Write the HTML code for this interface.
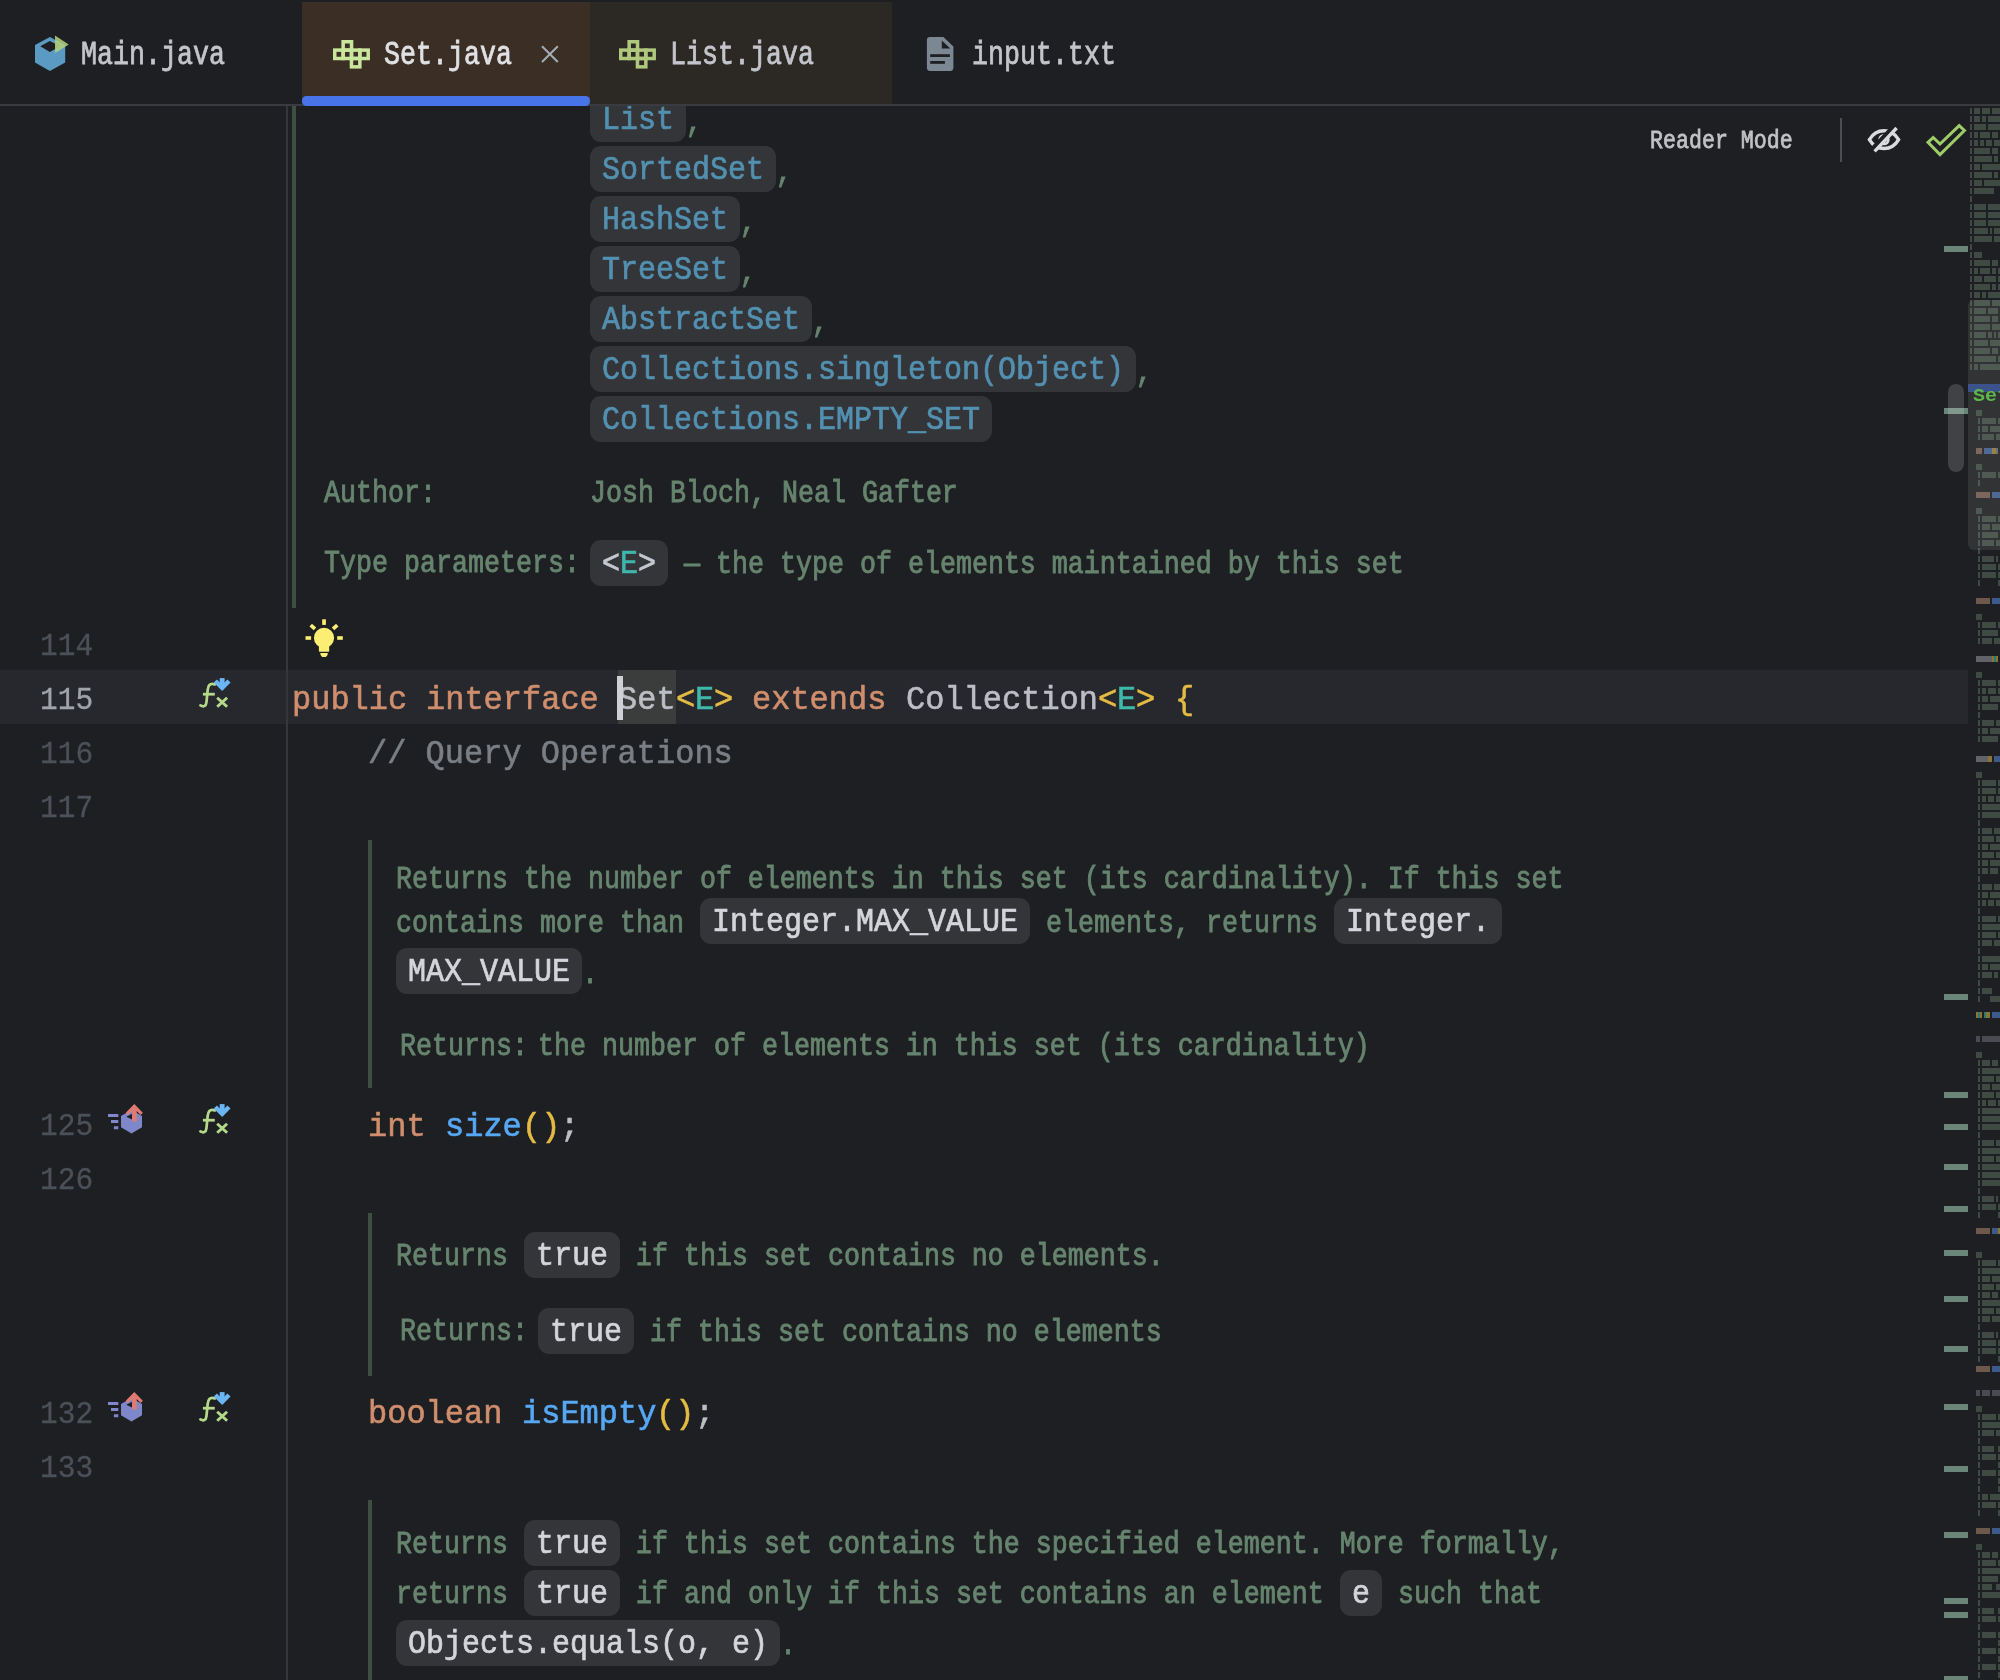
<!DOCTYPE html>
<html><head><meta charset="utf-8"><title>Set.java</title><style>
html,body{margin:0;padding:0;overflow:hidden;}
body{width:2000px;height:1680px;background:#1e1f22;overflow:hidden;position:relative;font-family:"Liberation Mono",monospace;}
.t{position:absolute;white-space:pre;line-height:1;transform-origin:0 0;display:block;}
#w{position:absolute;left:0;top:0;width:2000px;height:1680px;overflow:hidden;will-change:opacity;}
.r{position:absolute;}
.i{position:absolute;overflow:visible;}
</style></head><body><div id="w">
<div class="r" style="left:0.00px;top:670.00px;width:1968.00px;height:54.00px;background:#26282e;"></div>
<div class="r" style="left:618.00px;top:670.00px;width:58.00px;height:54.00px;background:#3a3d3c;"></div>
<div class="r" style="left:286.30px;top:106.00px;width:1.50px;height:1574.00px;background:#35363b;"></div>
<div class="r" style="left:292.00px;top:106.00px;width:4.00px;height:501.50px;background:#3e4f42;"></div>
<div class="r" style="left:368.00px;top:840.00px;width:4.00px;height:247.50px;background:#3e4f42;"></div>
<div class="r" style="left:368.00px;top:1212.50px;width:4.00px;height:163.00px;background:#3e4f42;"></div>
<div class="r" style="left:368.00px;top:1500.00px;width:4.00px;height:180.00px;background:#3e4f42;"></div>
<div class="r" style="left:590.00px;top:96.25px;width:96.00px;height:45.50px;background:#343539;border-radius:11px;"></div>
<span class="t" style="left:602.30px;top:104.75px;font-size:32.3px;color:#5390b0;transform:scaleX(0.9286);-webkit-text-stroke:0.70px #5390b0;">List</span>
<span class="t" style="left:686.00px;top:106.60px;font-size:31.2px;color:#66846e;transform:scaleX(0.8546);-webkit-text-stroke:0.90px #66846e;">,</span>
<div class="r" style="left:590.00px;top:146.25px;width:186.00px;height:45.50px;background:#343539;border-radius:11px;"></div>
<span class="t" style="left:602.30px;top:154.75px;font-size:32.3px;color:#5390b0;transform:scaleX(0.9286);-webkit-text-stroke:0.70px #5390b0;">SortedSet</span>
<span class="t" style="left:776.00px;top:156.60px;font-size:31.2px;color:#66846e;transform:scaleX(0.8546);-webkit-text-stroke:0.90px #66846e;">,</span>
<div class="r" style="left:590.00px;top:196.25px;width:150.00px;height:45.50px;background:#343539;border-radius:11px;"></div>
<span class="t" style="left:602.30px;top:204.75px;font-size:32.3px;color:#5390b0;transform:scaleX(0.9286);-webkit-text-stroke:0.70px #5390b0;">HashSet</span>
<span class="t" style="left:740.00px;top:206.60px;font-size:31.2px;color:#66846e;transform:scaleX(0.8546);-webkit-text-stroke:0.90px #66846e;">,</span>
<div class="r" style="left:590.00px;top:246.25px;width:150.00px;height:45.50px;background:#343539;border-radius:11px;"></div>
<span class="t" style="left:602.30px;top:254.75px;font-size:32.3px;color:#5390b0;transform:scaleX(0.9286);-webkit-text-stroke:0.70px #5390b0;">TreeSet</span>
<span class="t" style="left:740.00px;top:256.60px;font-size:31.2px;color:#66846e;transform:scaleX(0.8546);-webkit-text-stroke:0.90px #66846e;">,</span>
<div class="r" style="left:590.00px;top:296.25px;width:222.00px;height:45.50px;background:#343539;border-radius:11px;"></div>
<span class="t" style="left:602.30px;top:304.75px;font-size:32.3px;color:#5390b0;transform:scaleX(0.9286);-webkit-text-stroke:0.70px #5390b0;">AbstractSet</span>
<span class="t" style="left:812.00px;top:306.60px;font-size:31.2px;color:#66846e;transform:scaleX(0.8546);-webkit-text-stroke:0.90px #66846e;">,</span>
<div class="r" style="left:590.00px;top:346.25px;width:546.00px;height:45.50px;background:#343539;border-radius:11px;"></div>
<span class="t" style="left:602.30px;top:354.75px;font-size:32.3px;color:#5390b0;transform:scaleX(0.9286);-webkit-text-stroke:0.70px #5390b0;">Collections.singleton(Object)</span>
<span class="t" style="left:1136.00px;top:356.60px;font-size:31.2px;color:#66846e;transform:scaleX(0.8546);-webkit-text-stroke:0.90px #66846e;">,</span>
<div class="r" style="left:590.00px;top:396.25px;width:402.00px;height:45.50px;background:#343539;border-radius:11px;"></div>
<span class="t" style="left:602.30px;top:404.75px;font-size:32.3px;color:#5390b0;transform:scaleX(0.9286);-webkit-text-stroke:0.70px #5390b0;">Collections.EMPTY_SET</span>
<span class="t" style="left:324.00px;top:477.60px;font-size:31.2px;color:#66846e;transform:scaleX(0.8546);-webkit-text-stroke:0.90px #66846e;">Author:</span>
<span class="t" style="left:590.00px;top:477.85px;font-size:31.2px;color:#66846e;transform:scaleX(0.8546);-webkit-text-stroke:0.90px #66846e;">Josh Bloch, Neal Gafter</span>
<span class="t" style="left:324.00px;top:547.60px;font-size:31.2px;color:#66846e;transform:scaleX(0.8546);-webkit-text-stroke:0.90px #66846e;">Type parameters:</span>
<div class="r" style="left:590.00px;top:540.00px;width:78.00px;height:45.50px;background:#343539;border-radius:11px;"></div>
<span class="t" style="left:602.30px;top:548.50px;font-size:32.3px;color:#c5c8d0;transform:scaleX(0.9286);-webkit-text-stroke:0.70px #c5c8d0;">&lt;</span>
<span class="t" style="left:620.30px;top:548.50px;font-size:32.3px;color:#3fb5ac;transform:scaleX(0.9286);-webkit-text-stroke:0.70px #3fb5ac;">E</span>
<span class="t" style="left:638.30px;top:548.50px;font-size:32.3px;color:#c5c8d0;transform:scaleX(0.9286);-webkit-text-stroke:0.70px #c5c8d0;">&gt;</span>
<span class="t" style="left:668.00px;top:548.60px;font-size:31.2px;color:#66846e;transform:scaleX(0.8546);-webkit-text-stroke:0.90px #66846e;"> — the type of elements maintained by this set</span>
<span class="t" style="left:291.60px;top:684.34px;font-size:33.5px;color:#cf8e6d;transform:scaleX(0.9551);-webkit-text-stroke:0.60px #cf8e6d;">public</span>
<span class="t" style="left:426.00px;top:684.34px;font-size:33.5px;color:#cf8e6d;transform:scaleX(0.9551);-webkit-text-stroke:0.60px #cf8e6d;">interface</span>
<span class="t" style="left:618.00px;top:684.34px;font-size:33.5px;color:#bcbec4;transform:scaleX(0.9551);-webkit-text-stroke:0.60px #bcbec4;">Set</span>
<span class="t" style="left:675.60px;top:684.34px;font-size:33.5px;color:#e4bb44;transform:scaleX(0.9551);-webkit-text-stroke:0.60px #e4bb44;">&lt;</span>
<span class="t" style="left:694.80px;top:684.34px;font-size:33.5px;color:#3fb8a9;transform:scaleX(0.9551);-webkit-text-stroke:0.60px #3fb8a9;">E</span>
<span class="t" style="left:714.00px;top:684.34px;font-size:33.5px;color:#e4bb44;transform:scaleX(0.9551);-webkit-text-stroke:0.60px #e4bb44;">&gt;</span>
<span class="t" style="left:752.40px;top:684.34px;font-size:33.5px;color:#cf8e6d;transform:scaleX(0.9551);-webkit-text-stroke:0.60px #cf8e6d;">extends</span>
<span class="t" style="left:906.00px;top:684.34px;font-size:33.5px;color:#bcbec4;transform:scaleX(0.9551);-webkit-text-stroke:0.60px #bcbec4;">Collection</span>
<span class="t" style="left:1098.00px;top:684.34px;font-size:33.5px;color:#e4bb44;transform:scaleX(0.9551);-webkit-text-stroke:0.60px #e4bb44;">&lt;</span>
<span class="t" style="left:1117.20px;top:684.34px;font-size:33.5px;color:#3fb8a9;transform:scaleX(0.9551);-webkit-text-stroke:0.60px #3fb8a9;">E</span>
<span class="t" style="left:1136.40px;top:684.34px;font-size:33.5px;color:#e4bb44;transform:scaleX(0.9551);-webkit-text-stroke:0.60px #e4bb44;">&gt;</span>
<span class="t" style="left:1174.80px;top:684.34px;font-size:33.5px;color:#e4bb44;transform:scaleX(0.9551);-webkit-text-stroke:0.60px #e4bb44;">{</span>
<span class="t" style="left:368.40px;top:738.09px;font-size:33.5px;color:#7a7e85;transform:scaleX(0.9551);-webkit-text-stroke:0.60px #7a7e85;">// Query Operations</span>
<span class="t" style="left:368.40px;top:1110.59px;font-size:33.5px;color:#cf8e6d;transform:scaleX(0.9551);-webkit-text-stroke:0.60px #cf8e6d;">int</span>
<span class="t" style="left:445.20px;top:1110.59px;font-size:33.5px;color:#56a8f5;transform:scaleX(0.9551);-webkit-text-stroke:0.60px #56a8f5;">size</span>
<span class="t" style="left:522.00px;top:1110.59px;font-size:33.5px;color:#e4bb44;transform:scaleX(0.9551);-webkit-text-stroke:0.60px #e4bb44;">()</span>
<span class="t" style="left:560.40px;top:1110.59px;font-size:33.5px;color:#bcbec4;transform:scaleX(0.9551);-webkit-text-stroke:0.60px #bcbec4;">;</span>
<span class="t" style="left:368.40px;top:1398.09px;font-size:33.5px;color:#cf8e6d;transform:scaleX(0.9551);-webkit-text-stroke:0.60px #cf8e6d;">boolean</span>
<span class="t" style="left:522.00px;top:1398.09px;font-size:33.5px;color:#56a8f5;transform:scaleX(0.9551);-webkit-text-stroke:0.60px #56a8f5;">isEmpty</span>
<span class="t" style="left:656.40px;top:1398.09px;font-size:33.5px;color:#e4bb44;transform:scaleX(0.9551);-webkit-text-stroke:0.60px #e4bb44;">()</span>
<span class="t" style="left:694.80px;top:1398.09px;font-size:33.5px;color:#bcbec4;transform:scaleX(0.9551);-webkit-text-stroke:0.60px #bcbec4;">;</span>
<div class="r" style="left:617.00px;top:676.00px;width:6.20px;height:44.00px;background:#ced0d6;"></div>
<span class="t" style="left:396.00px;top:863.60px;font-size:31.2px;color:#66846e;transform:scaleX(0.8546);-webkit-text-stroke:0.90px #66846e;">Returns the number of elements in this set (its cardinality). If this set</span>
<span class="t" style="left:396.00px;top:907.85px;font-size:31.2px;color:#66846e;transform:scaleX(0.8546);-webkit-text-stroke:0.90px #66846e;">contains more than </span>
<div class="r" style="left:700.00px;top:898.00px;width:330.00px;height:45.50px;background:#343539;border-radius:11px;"></div>
<span class="t" style="left:712.30px;top:906.50px;font-size:32.3px;color:#d3d5db;transform:scaleX(0.9286);-webkit-text-stroke:0.70px #d3d5db;">Integer.MAX_VALUE</span>
<span class="t" style="left:1030.00px;top:907.85px;font-size:31.2px;color:#66846e;transform:scaleX(0.8546);-webkit-text-stroke:0.90px #66846e;"> elements, returns </span>
<div class="r" style="left:1334.00px;top:898.00px;width:168.00px;height:45.50px;background:#343539;border-radius:11px;"></div>
<span class="t" style="left:1346.30px;top:906.50px;font-size:32.3px;color:#d3d5db;transform:scaleX(0.9286);-webkit-text-stroke:0.70px #d3d5db;">Integer.</span>
<div class="r" style="left:396.00px;top:948.00px;width:186.00px;height:45.50px;background:#343539;border-radius:11px;"></div>
<span class="t" style="left:408.30px;top:956.50px;font-size:32.3px;color:#d3d5db;transform:scaleX(0.9286);-webkit-text-stroke:0.70px #d3d5db;">MAX_VALUE</span>
<span class="t" style="left:582.00px;top:958.60px;font-size:31.2px;color:#66846e;transform:scaleX(0.8546);-webkit-text-stroke:0.90px #66846e;">.</span>
<span class="t" style="left:400.00px;top:1031.10px;font-size:31.2px;color:#66846e;transform:scaleX(0.8546);-webkit-text-stroke:0.90px #66846e;">Returns:</span>
<span class="t" style="left:538.00px;top:1031.10px;font-size:31.2px;color:#66846e;transform:scaleX(0.8546);-webkit-text-stroke:0.90px #66846e;">the number of elements in this set (its cardinality)</span>
<span class="t" style="left:396.00px;top:1241.35px;font-size:31.2px;color:#66846e;transform:scaleX(0.8546);-webkit-text-stroke:0.90px #66846e;">Returns </span>
<div class="r" style="left:524.00px;top:1232.00px;width:96.00px;height:45.50px;background:#343539;border-radius:11px;"></div>
<span class="t" style="left:536.30px;top:1240.50px;font-size:32.3px;color:#d3d5db;transform:scaleX(0.9286);-webkit-text-stroke:0.70px #d3d5db;">true</span>
<span class="t" style="left:620.00px;top:1241.35px;font-size:31.2px;color:#66846e;transform:scaleX(0.8546);-webkit-text-stroke:0.90px #66846e;"> if this set contains no elements.</span>
<span class="t" style="left:400.00px;top:1315.60px;font-size:31.2px;color:#66846e;transform:scaleX(0.8546);-webkit-text-stroke:0.90px #66846e;">Returns:</span>
<div class="r" style="left:538.00px;top:1308.00px;width:96.00px;height:45.50px;background:#343539;border-radius:11px;"></div>
<span class="t" style="left:550.30px;top:1316.50px;font-size:32.3px;color:#d3d5db;transform:scaleX(0.9286);-webkit-text-stroke:0.70px #d3d5db;">true</span>
<span class="t" style="left:634.00px;top:1317.35px;font-size:31.2px;color:#66846e;transform:scaleX(0.8546);-webkit-text-stroke:0.90px #66846e;"> if this set contains no elements</span>
<span class="t" style="left:396.00px;top:1529.10px;font-size:31.2px;color:#66846e;transform:scaleX(0.8546);-webkit-text-stroke:0.90px #66846e;">Returns </span>
<div class="r" style="left:524.00px;top:1520.00px;width:96.00px;height:45.50px;background:#343539;border-radius:11px;"></div>
<span class="t" style="left:536.30px;top:1528.50px;font-size:32.3px;color:#d3d5db;transform:scaleX(0.9286);-webkit-text-stroke:0.70px #d3d5db;">true</span>
<span class="t" style="left:620.00px;top:1529.10px;font-size:31.2px;color:#66846e;transform:scaleX(0.8546);-webkit-text-stroke:0.90px #66846e;"> if this set contains the specified element. More formally,</span>
<span class="t" style="left:396.00px;top:1579.10px;font-size:31.2px;color:#66846e;transform:scaleX(0.8546);-webkit-text-stroke:0.90px #66846e;">returns </span>
<div class="r" style="left:524.00px;top:1570.00px;width:96.00px;height:45.50px;background:#343539;border-radius:11px;"></div>
<span class="t" style="left:536.30px;top:1578.50px;font-size:32.3px;color:#d3d5db;transform:scaleX(0.9286);-webkit-text-stroke:0.70px #d3d5db;">true</span>
<span class="t" style="left:620.00px;top:1579.10px;font-size:31.2px;color:#66846e;transform:scaleX(0.8546);-webkit-text-stroke:0.90px #66846e;"> if and only if this set contains an element </span>
<div class="r" style="left:1340.00px;top:1570.00px;width:42.00px;height:45.50px;background:#343539;border-radius:11px;"></div>
<span class="t" style="left:1352.30px;top:1578.50px;font-size:32.3px;color:#d3d5db;transform:scaleX(0.9286);-webkit-text-stroke:0.70px #d3d5db;">e</span>
<span class="t" style="left:1382.00px;top:1579.10px;font-size:31.2px;color:#66846e;transform:scaleX(0.8546);-webkit-text-stroke:0.90px #66846e;"> such that</span>
<div class="r" style="left:396.00px;top:1620.00px;width:384.00px;height:45.50px;background:#343539;border-radius:11px;"></div>
<span class="t" style="left:408.30px;top:1628.50px;font-size:32.3px;color:#d3d5db;transform:scaleX(0.9286);-webkit-text-stroke:0.70px #d3d5db;">Objects.equals(o, e)</span>
<span class="t" style="left:780.00px;top:1630.10px;font-size:31.2px;color:#66846e;transform:scaleX(0.8546);-webkit-text-stroke:0.90px #66846e;">.</span>
<span class="t" style="left:40.40px;top:632.04px;font-size:31.8px;color:#4b5059;transform:scaleX(0.9275);-webkit-text-stroke:0.30px #4b5059;">114</span>
<span class="t" style="left:40.40px;top:685.89px;font-size:31.8px;color:#a1a3ab;transform:scaleX(0.9275);-webkit-text-stroke:0.30px #a1a3ab;">115</span>
<span class="t" style="left:40.40px;top:739.89px;font-size:31.8px;color:#4b5059;transform:scaleX(0.9275);-webkit-text-stroke:0.30px #4b5059;">116</span>
<span class="t" style="left:40.40px;top:794.04px;font-size:31.8px;color:#4b5059;transform:scaleX(0.9275);-webkit-text-stroke:0.30px #4b5059;">117</span>
<span class="t" style="left:40.40px;top:1112.39px;font-size:31.8px;color:#4b5059;transform:scaleX(0.9275);-webkit-text-stroke:0.30px #4b5059;">125</span>
<span class="t" style="left:40.40px;top:1166.39px;font-size:31.8px;color:#4b5059;transform:scaleX(0.9275);-webkit-text-stroke:0.30px #4b5059;">126</span>
<span class="t" style="left:40.40px;top:1399.89px;font-size:31.8px;color:#4b5059;transform:scaleX(0.9275);-webkit-text-stroke:0.30px #4b5059;">132</span>
<span class="t" style="left:40.40px;top:1453.89px;font-size:31.8px;color:#4b5059;transform:scaleX(0.9275);-webkit-text-stroke:0.30px #4b5059;">133</span>
<svg class="i" style="left:198px;top:1103px" width="36" height="34" viewBox="0 0 36 34">
<path d="M16.8 7.4 C11.6 5.4 10 9 9.7 13 L8.4 25.5 C8 29.4 5.3 30.2 2.4 28.4" fill="none" stroke="#b5d98a" stroke-width="2.7" stroke-linecap="round"/>
<path d="M4.9 17.2 H16.8" stroke="#b5d98a" stroke-width="2.8" stroke-linecap="butt"/>
<path d="M19.2 20.7 L29.1 29.8 M29.1 20.7 L19.2 29.8" stroke="#b5d98a" stroke-width="2.9"/>
<path d="M17.3 3.95 L24.15 10.8 L31 3.95" fill="none" stroke="#6cb5f5" stroke-width="4.4"/>
<rect x="21.7" y="1.1" width="4.9" height="9" fill="#6cb5f5"/>
</svg>
<svg class="i" style="left:198px;top:676.75px" width="36" height="34" viewBox="0 0 36 34">
<path d="M16.8 7.4 C11.6 5.4 10 9 9.7 13 L8.4 25.5 C8 29.4 5.3 30.2 2.4 28.4" fill="none" stroke="#b5d98a" stroke-width="2.7" stroke-linecap="round"/>
<path d="M4.9 17.2 H16.8" stroke="#b5d98a" stroke-width="2.8" stroke-linecap="butt"/>
<path d="M19.2 20.7 L29.1 29.8 M29.1 20.7 L19.2 29.8" stroke="#b5d98a" stroke-width="2.9"/>
<path d="M17.3 3.95 L24.15 10.8 L31 3.95" fill="none" stroke="#6cb5f5" stroke-width="4.4"/>
<rect x="21.7" y="1.1" width="4.9" height="9" fill="#6cb5f5"/>
</svg>
<svg class="i" style="left:198px;top:1390.5px" width="36" height="34" viewBox="0 0 36 34">
<path d="M16.8 7.4 C11.6 5.4 10 9 9.7 13 L8.4 25.5 C8 29.4 5.3 30.2 2.4 28.4" fill="none" stroke="#b5d98a" stroke-width="2.7" stroke-linecap="round"/>
<path d="M4.9 17.2 H16.8" stroke="#b5d98a" stroke-width="2.8" stroke-linecap="butt"/>
<path d="M19.2 20.7 L29.1 29.8 M29.1 20.7 L19.2 29.8" stroke="#b5d98a" stroke-width="2.9"/>
<path d="M17.3 3.95 L24.15 10.8 L31 3.95" fill="none" stroke="#6cb5f5" stroke-width="4.4"/>
<rect x="21.7" y="1.1" width="4.9" height="9" fill="#6cb5f5"/>
</svg>
<svg class="i" style="left:106px;top:1102px" width="40" height="34" viewBox="0 0 40 34">
<path d="M2 12 H12.3 V15 H2 Z M5 18 H12.3 V21 H5 Z M7.9 24.2 H12.3 V27.2 H7.9 Z" fill="#7f88cd"/>
<path d="M25.5 8 L36 14 V25.3 L25.5 31.4 L15 25.3 V14 Z" fill="#7d87c9"/>
<path d="M20.2 14.7 L26.06 11.7 V17.6 Z" fill="#1e1f22"/>
<path d="M28.3 2.1 L36.84 10.64 L34.74 12.95 L30.75 8.96 V19.46 H26.06 V8.96 L21.86 12.95 L19.76 10.64 Z" fill="#e07b73"/>
</svg>
<svg class="i" style="left:106px;top:1389.5px" width="40" height="34" viewBox="0 0 40 34">
<path d="M2 12 H12.3 V15 H2 Z M5 18 H12.3 V21 H5 Z M7.9 24.2 H12.3 V27.2 H7.9 Z" fill="#7f88cd"/>
<path d="M25.5 8 L36 14 V25.3 L25.5 31.4 L15 25.3 V14 Z" fill="#7d87c9"/>
<path d="M20.2 14.7 L26.06 11.7 V17.6 Z" fill="#1e1f22"/>
<path d="M28.3 2.1 L36.84 10.64 L34.74 12.95 L30.75 8.96 V19.46 H26.06 V8.96 L21.86 12.95 L19.76 10.64 Z" fill="#e07b73"/>
</svg>
<svg class="i" style="left:300px;top:612px" width="48" height="50" viewBox="0 0 48 50">
<g fill="#fcee73">
<circle cx="24" cy="25.8" r="10.1"/>
<rect x="18.9" y="30" width="10.3" height="9.7" rx="0.8"/>
<path d="M20.3 40.9 H27.8 C27.8 43.6 26.6 45.1 24.05 45.1 C21.5 45.1 20.3 43.6 20.3 40.9 Z"/>
<rect x="22.2" y="7.3" width="3.7" height="5.6"/>
<rect x="5.5" y="24.2" width="5.6" height="3.6"/>
<rect x="37.2" y="24.2" width="5.6" height="3.6"/>
<rect x="10" y="13.1" width="5.7" height="3.7" transform="rotate(42 12.85 14.95)"/>
<rect x="32.3" y="13.1" width="5.7" height="3.7" transform="rotate(-42 35.15 14.95)"/>
</g></svg>
<span class="t" style="left:1649.70px;top:127.87px;font-size:26.4px;color:#c0c2c6;transform:scaleX(0.8193);-webkit-text-stroke:0.80px #c0c2c6;">Reader Mode</span>
<div class="r" style="left:1840.00px;top:118.00px;width:2.00px;height:44.00px;background:#4a4d52;"></div>
<svg class="i" style="left:1864px;top:122px" width="40" height="36" viewBox="0 0 40 36">
<path d="M5.4 17.6 C9 11.4 14 8.7 20 8.7 C26 8.7 31 11.4 34.6 17.6 C31 23.8 26 26.5 20 26.5 C14 26.5 9 23.8 5.4 17.6 Z" fill="none" stroke="#dadbdd" stroke-width="3.4" stroke-linejoin="miter"/>
<circle cx="20" cy="17.6" r="4.4" fill="none" stroke="#dadbdd" stroke-width="2.6"/>
<path d="M30.9 3.4 L7.2 28.4" stroke="#1e1f22" stroke-width="4.6"/>
<path d="M32.6 6 L10.6 29.4" stroke="#dadbdd" stroke-width="3.3"/>
</svg>
<svg class="i" style="left:1920px;top:118px" width="52" height="44" viewBox="0 0 52 44">
<path d="M8 24.4 L13.2 19.5 L20 26 L39.2 7.6 L44.4 12.5 L20 36.6 Z" fill="none" stroke="#9fcc68" stroke-width="3" stroke-linejoin="miter"/>
</svg>
<div class="r" style="left:1944.00px;top:246.00px;width:24.00px;height:6.00px;background:#6b8578;"></div>
<div class="r" style="left:1944.00px;top:408.00px;width:24.00px;height:6.00px;background:#6b8578;"></div>
<div class="r" style="left:1944.00px;top:994.00px;width:24.00px;height:6.00px;background:#6b8578;"></div>
<div class="r" style="left:1944.00px;top:1092.00px;width:24.00px;height:6.00px;background:#6b8578;"></div>
<div class="r" style="left:1944.00px;top:1124.00px;width:24.00px;height:6.00px;background:#6b8578;"></div>
<div class="r" style="left:1944.00px;top:1164.00px;width:24.00px;height:6.00px;background:#6b8578;"></div>
<div class="r" style="left:1944.00px;top:1206.00px;width:24.00px;height:6.00px;background:#6b8578;"></div>
<div class="r" style="left:1944.00px;top:1250.00px;width:24.00px;height:6.00px;background:#6b8578;"></div>
<div class="r" style="left:1944.00px;top:1296.00px;width:24.00px;height:6.00px;background:#6b8578;"></div>
<div class="r" style="left:1944.00px;top:1346.00px;width:24.00px;height:6.00px;background:#6b8578;"></div>
<div class="r" style="left:1944.00px;top:1404.00px;width:24.00px;height:6.00px;background:#6b8578;"></div>
<div class="r" style="left:1944.00px;top:1466.00px;width:24.00px;height:6.00px;background:#6b8578;"></div>
<div class="r" style="left:1944.00px;top:1532.00px;width:24.00px;height:6.00px;background:#6b8578;"></div>
<div class="r" style="left:1944.00px;top:1598.00px;width:24.00px;height:6.00px;background:#6b8578;"></div>
<div class="r" style="left:1944.00px;top:1612.00px;width:24.00px;height:6.00px;background:#6b8578;"></div>
<div class="r" style="left:1944.00px;top:1676.00px;width:24.00px;height:6.00px;background:#6b8578;"></div>
<div class="r" style="left:1948.00px;top:384.00px;width:16.00px;height:88.00px;background:rgba(255,255,255,0.155);border-radius:8px;"></div>
<div class="r" style="left:0.00px;top:0.00px;width:2000.00px;height:104.00px;background:#1e1f22;"></div>
<div class="r" style="left:302.00px;top:2.00px;width:288.00px;height:102.00px;background:#3b2f25;"></div>
<div class="r" style="left:590.00px;top:2.00px;width:302.00px;height:102.00px;background:#2c2823;"></div>
<div class="r" style="left:0.00px;top:104.00px;width:2000.00px;height:2.00px;background:#393b40;"></div>
<div class="r" style="left:302.00px;top:96.00px;width:288.00px;height:10.00px;background:#4775e9;border-radius:4.5px;"></div>
<span class="t" style="left:80.90px;top:40.37px;font-size:32.8px;color:#c3c5cb;transform:scaleX(0.8129);-webkit-text-stroke:0.80px #c3c5cb;">Main.java</span>
<span class="t" style="left:383.60px;top:40.37px;font-size:32.8px;color:#dfe1e5;transform:scaleX(0.8129);-webkit-text-stroke:0.80px #dfe1e5;">Set.java</span>
<span class="t" style="left:669.60px;top:40.37px;font-size:32.8px;color:#c3c5cb;transform:scaleX(0.8129);-webkit-text-stroke:0.80px #c3c5cb;">List.java</span>
<span class="t" style="left:972.40px;top:40.37px;font-size:32.8px;color:#c3c5cb;transform:scaleX(0.8129);-webkit-text-stroke:0.80px #c3c5cb;">input.txt</span>
<svg class="i" style="left:30px;top:30px" width="44" height="46" viewBox="0 0 44 46">
<path d="M19.9 6.9 L35.2 15 V32.5 L19.9 41 L5 32.5 V15 Z M19.9 11 L10.2 16.3 L19.9 21.9 L30 16.3 Z" fill="#5b9bc3" fill-rule="evenodd"/>
<path d="M25 5.6 L38.75 14.4 L25.2 22.9 Z" fill="#b3d27f" fill-opacity="0.86"/>
<path d="M25.1 12.2 L30 16.2 L25.2 19.6 Z" fill="#a6c474" fill-opacity="0.9"/>
</svg>
<svg class="i" style="left:332.9px;top:40.2px" width="38" height="30" viewBox="0 0 38 30"><g fill="none" stroke="#c8e79c" stroke-width="3.5"><rect x="10.15" y="1.75" width="8.40" height="8.40"/><rect x="1.75" y="10.10" width="8.40" height="8.40"/><rect x="10.15" y="10.10" width="8.40" height="8.40"/><rect x="18.45" y="10.10" width="8.40" height="8.40"/><rect x="26.80" y="10.10" width="8.40" height="8.40"/><rect x="18.45" y="18.45" width="8.40" height="8.40"/></g></svg>
<svg class="i" style="left:618.9px;top:40.2px" width="38" height="30" viewBox="0 0 38 30"><g fill="none" stroke="#b0c77e" stroke-width="3.5"><rect x="10.15" y="1.75" width="8.40" height="8.40"/><rect x="1.75" y="10.10" width="8.40" height="8.40"/><rect x="10.15" y="10.10" width="8.40" height="8.40"/><rect x="18.45" y="10.10" width="8.40" height="8.40"/><rect x="26.80" y="10.10" width="8.40" height="8.40"/><rect x="18.45" y="18.45" width="8.40" height="8.40"/></g></svg>
<svg class="i" style="left:538px;top:42px" width="24" height="24" viewBox="0 0 24 24"><path d="M4 4.2 L19.8 20 M19.8 4.2 L4 20" stroke="#a4adb8" stroke-width="2"/></svg>
<svg class="i" style="left:924px;top:34px" width="34" height="40" viewBox="0 0 34 40">
<path d="M6 3 H19.4 L29.4 12.5 V33.8 Q29.4 36.9 26.4 36.9 H6 Q2.9 36.9 2.9 33.8 V6 Q2.9 3 6 3 Z" fill="#7b8792"/>
<path d="M17.8 6.4 L26.3 14.6 H17.8 Z" fill="#1e1f22"/>
<rect x="6.2" y="20.2" width="19.7" height="2.8" fill="#1e1f22"/>
<rect x="6.2" y="27" width="14.7" height="2.8" fill="#1e1f22"/>
</svg>
<div class="r" style="left:1970.00px;top:108.00px;width:2.12px;height:6.00px;background:#3e4a42;"></div>
<div class="r" style="left:1974.00px;top:108.00px;width:6.00px;height:6.00px;background:#3e4a42;"></div>
<div class="r" style="left:1982.00px;top:108.00px;width:8.00px;height:6.00px;background:#3e4a42;"></div>
<div class="r" style="left:1992.00px;top:108.00px;width:8.00px;height:6.00px;background:#3e4a42;"></div>
<div class="r" style="left:1970.00px;top:116.00px;width:2.12px;height:6.00px;background:#3e4a42;"></div>
<div class="r" style="left:1974.00px;top:116.00px;width:6.00px;height:6.00px;background:#3e4a42;"></div>
<div class="r" style="left:1982.00px;top:116.00px;width:4.00px;height:6.00px;background:#3e4a42;"></div>
<div class="r" style="left:1988.00px;top:116.00px;width:12.00px;height:6.00px;background:#3e4a42;"></div>
<div class="r" style="left:1970.00px;top:124.00px;width:2.12px;height:6.00px;background:#3e4a42;"></div>
<div class="r" style="left:1974.00px;top:124.00px;width:12.00px;height:6.00px;background:#3e4a42;"></div>
<div class="r" style="left:1988.00px;top:124.00px;width:12.00px;height:6.00px;background:#3e4a42;"></div>
<div class="r" style="left:1970.00px;top:132.00px;width:2.12px;height:6.00px;background:#3e4a42;"></div>
<div class="r" style="left:1974.00px;top:132.00px;width:4.00px;height:6.00px;background:#3e4a42;"></div>
<div class="r" style="left:1980.00px;top:132.00px;width:10.00px;height:6.00px;background:#3e4a42;"></div>
<div class="r" style="left:1992.00px;top:132.00px;width:6.00px;height:6.00px;background:#3e4a42;"></div>
<div class="r" style="left:1970.00px;top:140.00px;width:2.12px;height:6.00px;background:#3e4a42;"></div>
<div class="r" style="left:1974.00px;top:140.00px;width:4.00px;height:6.00px;background:#3e4a42;"></div>
<div class="r" style="left:1980.00px;top:140.00px;width:4.00px;height:6.00px;background:#3e4a42;"></div>
<div class="r" style="left:1986.00px;top:140.00px;width:6.00px;height:6.00px;background:#3e4a42;"></div>
<div class="r" style="left:1994.00px;top:140.00px;width:6.00px;height:6.00px;background:#3e4a42;"></div>
<div class="r" style="left:1970.00px;top:148.00px;width:2.12px;height:6.00px;background:#3e4a42;"></div>
<div class="r" style="left:1974.00px;top:148.00px;width:16.00px;height:6.00px;background:#3e4a42;"></div>
<div class="r" style="left:1992.00px;top:148.00px;width:6.00px;height:6.00px;background:#3e4a42;"></div>
<div class="r" style="left:1970.00px;top:156.00px;width:2.12px;height:6.00px;background:#3e4a42;"></div>
<div class="r" style="left:1974.00px;top:156.00px;width:18.00px;height:6.00px;background:#3e4a42;"></div>
<div class="r" style="left:1994.00px;top:156.00px;width:4.00px;height:6.00px;background:#3e4a42;"></div>
<div class="r" style="left:1970.00px;top:164.00px;width:2.12px;height:6.00px;background:#3e4a42;"></div>
<div class="r" style="left:1974.00px;top:164.00px;width:6.00px;height:6.00px;background:#3e4a42;"></div>
<div class="r" style="left:1982.00px;top:164.00px;width:18.00px;height:6.00px;background:#3e4a42;"></div>
<div class="r" style="left:1970.00px;top:172.00px;width:2.12px;height:6.00px;background:#3e4a42;"></div>
<div class="r" style="left:1974.00px;top:172.00px;width:18.00px;height:6.00px;background:#3e4a42;"></div>
<div class="r" style="left:1994.00px;top:172.00px;width:4.00px;height:6.00px;background:#3e4a42;"></div>
<div class="r" style="left:1970.00px;top:180.00px;width:2.12px;height:6.00px;background:#3e4a42;"></div>
<div class="r" style="left:1974.00px;top:180.00px;width:8.00px;height:6.00px;background:#3e4a42;"></div>
<div class="r" style="left:1984.00px;top:180.00px;width:16.00px;height:6.00px;background:#3e4a42;"></div>
<div class="r" style="left:1970.00px;top:188.00px;width:2.12px;height:6.00px;background:#3e4a42;"></div>
<div class="r" style="left:1974.00px;top:188.00px;width:20.00px;height:6.00px;background:#3e4a42;"></div>
<div class="r" style="left:1970.00px;top:196.00px;width:2.12px;height:6.00px;background:#3e4a42;"></div>
<div class="r" style="left:1970.00px;top:204.00px;width:2.12px;height:6.00px;background:#3e4a42;"></div>
<div class="r" style="left:1974.00px;top:204.00px;width:12.00px;height:6.00px;background:#3e4a42;"></div>
<div class="r" style="left:1988.00px;top:204.00px;width:12.00px;height:6.00px;background:#3e4a42;"></div>
<div class="r" style="left:1970.00px;top:212.00px;width:2.12px;height:6.00px;background:#3e4a42;"></div>
<div class="r" style="left:1974.00px;top:212.00px;width:12.00px;height:6.00px;background:#3e4a42;"></div>
<div class="r" style="left:1988.00px;top:212.00px;width:12.00px;height:6.00px;background:#3e4a42;"></div>
<div class="r" style="left:1970.00px;top:220.00px;width:2.12px;height:6.00px;background:#3e4a42;"></div>
<div class="r" style="left:1974.00px;top:220.00px;width:12.00px;height:6.00px;background:#3e4a42;"></div>
<div class="r" style="left:1988.00px;top:220.00px;width:12.00px;height:6.00px;background:#3e4a42;"></div>
<div class="r" style="left:1970.00px;top:228.00px;width:2.12px;height:6.00px;background:#3e4a42;"></div>
<div class="r" style="left:1974.00px;top:228.00px;width:14.00px;height:6.00px;background:#3e4a42;"></div>
<div class="r" style="left:1990.00px;top:228.00px;width:2.00px;height:6.00px;background:#3e4a42;"></div>
<div class="r" style="left:1994.00px;top:228.00px;width:6.00px;height:6.00px;background:#3e4a42;"></div>
<div class="r" style="left:1970.00px;top:236.00px;width:2.12px;height:6.00px;background:#3e4a42;"></div>
<div class="r" style="left:1974.00px;top:236.00px;width:18.00px;height:6.00px;background:#3e4a42;"></div>
<div class="r" style="left:1994.00px;top:236.00px;width:6.00px;height:6.00px;background:#3e4a42;"></div>
<div class="r" style="left:1970.00px;top:244.00px;width:2.12px;height:6.00px;background:#3e4a42;"></div>
<div class="r" style="left:1970.00px;top:252.00px;width:2.12px;height:6.00px;background:#3e4a42;"></div>
<div class="r" style="left:1974.00px;top:252.00px;width:8.00px;height:6.00px;background:#3e4a42;"></div>
<div class="r" style="left:1970.00px;top:260.00px;width:2.12px;height:6.00px;background:#3e4a42;"></div>
<div class="r" style="left:1974.00px;top:260.00px;width:16.00px;height:6.00px;background:#3e4a42;"></div>
<div class="r" style="left:1992.00px;top:260.00px;width:6.00px;height:6.00px;background:#3e4a42;"></div>
<div class="r" style="left:1970.00px;top:268.00px;width:2.12px;height:6.00px;background:#3e4a42;"></div>
<div class="r" style="left:1974.00px;top:268.00px;width:4.00px;height:6.00px;background:#3e4a42;"></div>
<div class="r" style="left:1980.00px;top:268.00px;width:10.00px;height:6.00px;background:#3e4a42;"></div>
<div class="r" style="left:1992.00px;top:268.00px;width:4.00px;height:6.00px;background:#3e4a42;"></div>
<div class="r" style="left:1998.00px;top:268.00px;width:2.00px;height:6.00px;background:#3e4a42;"></div>
<div class="r" style="left:1970.00px;top:276.00px;width:2.12px;height:6.00px;background:#3e4a42;"></div>
<div class="r" style="left:1974.00px;top:276.00px;width:8.00px;height:6.00px;background:#3e4a42;"></div>
<div class="r" style="left:1984.00px;top:276.00px;width:12.00px;height:6.00px;background:#3e4a42;"></div>
<div class="r" style="left:1998.00px;top:276.00px;width:2.00px;height:6.00px;background:#3e4a42;"></div>
<div class="r" style="left:1970.00px;top:284.00px;width:2.12px;height:6.00px;background:#3e4a42;"></div>
<div class="r" style="left:1974.00px;top:284.00px;width:16.00px;height:6.00px;background:#3e4a42;"></div>
<div class="r" style="left:1992.00px;top:284.00px;width:4.00px;height:6.00px;background:#3e4a42;"></div>
<div class="r" style="left:1998.00px;top:284.00px;width:2.00px;height:6.00px;background:#3e4a42;"></div>
<div class="r" style="left:1970.00px;top:292.00px;width:2.12px;height:6.00px;background:#3e4a42;"></div>
<div class="r" style="left:1974.00px;top:292.00px;width:6.00px;height:6.00px;background:#3e4a42;"></div>
<div class="r" style="left:1982.00px;top:292.00px;width:4.00px;height:6.00px;background:#3e4a42;"></div>
<div class="r" style="left:1988.00px;top:292.00px;width:12.00px;height:6.00px;background:#3e4a42;"></div>
<div class="r" style="left:1970.00px;top:300.00px;width:2.12px;height:6.00px;background:#3e4a42;"></div>
<div class="r" style="left:1974.00px;top:300.00px;width:16.00px;height:6.00px;background:#3e4a42;"></div>
<div class="r" style="left:1992.00px;top:300.00px;width:8.00px;height:6.00px;background:#3e4a42;"></div>
<div class="r" style="left:1970.00px;top:308.00px;width:2.12px;height:6.00px;background:#3e4a42;"></div>
<div class="r" style="left:1974.00px;top:308.00px;width:12.00px;height:6.00px;background:#3e4a42;"></div>
<div class="r" style="left:1988.00px;top:308.00px;width:10.00px;height:6.00px;background:#3e4a42;"></div>
<div class="r" style="left:1970.00px;top:316.00px;width:2.12px;height:6.00px;background:#3e4a42;"></div>
<div class="r" style="left:1974.00px;top:316.00px;width:16.00px;height:6.00px;background:#3e4a42;"></div>
<div class="r" style="left:1992.00px;top:316.00px;width:6.00px;height:6.00px;background:#3e4a42;"></div>
<div class="r" style="left:1970.00px;top:324.00px;width:2.12px;height:6.00px;background:#3e4a42;"></div>
<div class="r" style="left:1974.00px;top:324.00px;width:16.00px;height:6.00px;background:#3e4a42;"></div>
<div class="r" style="left:1992.00px;top:324.00px;width:8.00px;height:6.00px;background:#3e4a42;"></div>
<div class="r" style="left:1970.00px;top:332.00px;width:2.12px;height:6.00px;background:#3e4a42;"></div>
<div class="r" style="left:1974.00px;top:332.00px;width:12.00px;height:6.00px;background:#3e4a42;"></div>
<div class="r" style="left:1988.00px;top:332.00px;width:4.00px;height:6.00px;background:#3e4a42;"></div>
<div class="r" style="left:1994.00px;top:332.00px;width:2.00px;height:6.00px;background:#3e4a42;"></div>
<div class="r" style="left:1998.00px;top:332.00px;width:2.00px;height:6.00px;background:#3e4a42;"></div>
<div class="r" style="left:1970.00px;top:340.00px;width:2.12px;height:6.00px;background:#3e4a42;"></div>
<div class="r" style="left:1974.00px;top:340.00px;width:14.00px;height:6.00px;background:#3e4a42;"></div>
<div class="r" style="left:1990.00px;top:340.00px;width:10.00px;height:6.00px;background:#3e4a42;"></div>
<div class="r" style="left:1970.00px;top:348.00px;width:2.12px;height:6.00px;background:#3e4a42;"></div>
<div class="r" style="left:1974.00px;top:348.00px;width:16.00px;height:6.00px;background:#3e4a42;"></div>
<div class="r" style="left:1992.00px;top:348.00px;width:6.00px;height:6.00px;background:#3e4a42;"></div>
<div class="r" style="left:1970.00px;top:356.00px;width:2.12px;height:6.00px;background:#3e4a42;"></div>
<div class="r" style="left:1974.00px;top:356.00px;width:22.00px;height:6.00px;background:#3e4a42;"></div>
<div class="r" style="left:1998.00px;top:356.00px;width:2.00px;height:6.00px;background:#3e4a42;"></div>
<div class="r" style="left:1970.00px;top:364.00px;width:2.12px;height:6.00px;background:#3e4a42;"></div>
<div class="r" style="left:1974.00px;top:364.00px;width:4.00px;height:6.00px;background:#3e4a42;"></div>
<div class="r" style="left:1980.00px;top:364.00px;width:20.00px;height:6.00px;background:#3e4a42;"></div>
<div class="r" style="left:1976.00px;top:410.00px;width:6.00px;height:6.00px;background:#3e4a42;"></div>
<div class="r" style="left:1978.00px;top:418.00px;width:2.00px;height:6.00px;background:#3e4a42;"></div>
<div class="r" style="left:1982.00px;top:418.00px;width:14.00px;height:6.00px;background:#3e4a42;"></div>
<div class="r" style="left:1998.00px;top:418.00px;width:2.00px;height:6.00px;background:#3e4a42;"></div>
<div class="r" style="left:1978.00px;top:426.00px;width:2.00px;height:6.00px;background:#3e4a42;"></div>
<div class="r" style="left:1982.00px;top:426.00px;width:6.00px;height:6.00px;background:#3e4a42;"></div>
<div class="r" style="left:1990.00px;top:426.00px;width:10.00px;height:6.00px;background:#3e4a42;"></div>
<div class="r" style="left:1978.00px;top:434.00px;width:2.00px;height:6.00px;background:#3e4a42;"></div>
<div class="r" style="left:1982.00px;top:434.00px;width:12.00px;height:6.00px;background:#3e4a42;"></div>
<div class="r" style="left:1996.00px;top:434.00px;width:4.00px;height:6.00px;background:#3e4a42;"></div>
<div class="r" style="left:1976.00px;top:448.00px;width:6.00px;height:6.00px;background:#6e584c;"></div>
<div class="r" style="left:1984.00px;top:448.00px;width:8.00px;height:6.00px;background:#3e5a8a;"></div>
<div class="r" style="left:1992.00px;top:448.00px;width:4.00px;height:6.00px;background:#8a7634;"></div>
<div class="r" style="left:1996.00px;top:448.00px;width:2.00px;height:6.00px;background:#626368;"></div>
<div class="r" style="left:1976.00px;top:464.00px;width:6.00px;height:6.00px;background:#3e4a42;"></div>
<div class="r" style="left:1978.00px;top:472.00px;width:2.00px;height:6.00px;background:#3e4a42;"></div>
<div class="r" style="left:1982.00px;top:472.00px;width:14.00px;height:6.00px;background:#3e4a42;"></div>
<div class="r" style="left:1998.00px;top:472.00px;width:2.00px;height:6.00px;background:#3e4a42;"></div>
<div class="r" style="left:1978.00px;top:480.00px;width:2.00px;height:6.00px;background:#3e4a42;"></div>
<div class="r" style="left:1976.00px;top:492.00px;width:14.00px;height:6.00px;background:#6e584c;"></div>
<div class="r" style="left:1992.00px;top:492.00px;width:8.00px;height:6.00px;background:#3e5a8a;"></div>
<div class="r" style="left:1976.00px;top:508.00px;width:6.00px;height:6.00px;background:#3e4a42;"></div>
<div class="r" style="left:1978.00px;top:516.00px;width:2.00px;height:6.00px;background:#3e4a42;"></div>
<div class="r" style="left:1982.00px;top:516.00px;width:14.00px;height:6.00px;background:#3e4a42;"></div>
<div class="r" style="left:1998.00px;top:516.00px;width:2.00px;height:6.00px;background:#3e4a42;"></div>
<div class="r" style="left:1978.00px;top:524.00px;width:2.00px;height:6.00px;background:#3e4a42;"></div>
<div class="r" style="left:1982.00px;top:524.00px;width:8.00px;height:6.00px;background:#3e4a42;"></div>
<div class="r" style="left:1992.00px;top:524.00px;width:8.00px;height:6.00px;background:#3e4a42;"></div>
<div class="r" style="left:1978.00px;top:532.00px;width:2.00px;height:6.00px;background:#3e4a42;"></div>
<div class="r" style="left:1982.00px;top:532.00px;width:16.00px;height:6.00px;background:#3e4a42;"></div>
<div class="r" style="left:1978.00px;top:540.00px;width:2.00px;height:6.00px;background:#3e4a42;"></div>
<div class="r" style="left:1982.00px;top:540.00px;width:12.00px;height:6.00px;background:#3e4a42;"></div>
<div class="r" style="left:1996.00px;top:540.00px;width:4.00px;height:6.00px;background:#3e4a42;"></div>
<div class="r" style="left:1978.00px;top:548.00px;width:2.00px;height:6.00px;background:#3e4a42;"></div>
<div class="r" style="left:1978.00px;top:556.00px;width:2.00px;height:6.00px;background:#3e4a42;"></div>
<div class="r" style="left:1982.00px;top:556.00px;width:12.00px;height:6.00px;background:#3e4a42;"></div>
<div class="r" style="left:1996.00px;top:556.00px;width:2.00px;height:6.00px;background:#3e4a42;"></div>
<div class="r" style="left:1978.00px;top:564.00px;width:2.00px;height:6.00px;background:#3e4a42;"></div>
<div class="r" style="left:1982.00px;top:564.00px;width:14.00px;height:6.00px;background:#3e4a42;"></div>
<div class="r" style="left:1998.00px;top:564.00px;width:2.00px;height:6.00px;background:#3e4a42;"></div>
<div class="r" style="left:1978.00px;top:572.00px;width:2.00px;height:6.00px;background:#3e4a42;"></div>
<div class="r" style="left:1982.00px;top:572.00px;width:14.00px;height:6.00px;background:#3e4a42;"></div>
<div class="r" style="left:1998.00px;top:572.00px;width:2.00px;height:6.00px;background:#3e4a42;"></div>
<div class="r" style="left:1978.00px;top:580.00px;width:2.00px;height:6.00px;background:#3e4a42;"></div>
<div class="r" style="left:1998.00px;top:580.00px;width:2.00px;height:6.00px;background:#3e4a42;"></div>
<div class="r" style="left:1976.00px;top:598.00px;width:14.00px;height:6.00px;background:#6e584c;"></div>
<div class="r" style="left:1992.00px;top:598.00px;width:8.00px;height:6.00px;background:#3e5a8a;"></div>
<div class="r" style="left:1976.00px;top:614.00px;width:6.00px;height:6.00px;background:#3e4a42;"></div>
<div class="r" style="left:1978.00px;top:622.00px;width:2.00px;height:6.00px;background:#3e4a42;"></div>
<div class="r" style="left:1982.00px;top:622.00px;width:14.00px;height:6.00px;background:#3e4a42;"></div>
<div class="r" style="left:1998.00px;top:622.00px;width:2.00px;height:6.00px;background:#3e4a42;"></div>
<div class="r" style="left:1978.00px;top:630.00px;width:2.00px;height:6.00px;background:#3e4a42;"></div>
<div class="r" style="left:1982.00px;top:630.00px;width:16.00px;height:6.00px;background:#3e4a42;"></div>
<div class="r" style="left:1978.00px;top:638.00px;width:2.00px;height:6.00px;background:#3e4a42;"></div>
<div class="r" style="left:1982.00px;top:638.00px;width:10.00px;height:6.00px;background:#3e4a42;"></div>
<div class="r" style="left:1994.00px;top:638.00px;width:6.00px;height:6.00px;background:#3e4a42;"></div>
<div class="r" style="left:1976.00px;top:656.00px;width:16.00px;height:6.00px;background:#626368;"></div>
<div class="r" style="left:1992.00px;top:656.00px;width:2.00px;height:6.00px;background:#8a7634;"></div>
<div class="r" style="left:1994.00px;top:656.00px;width:2.00px;height:6.00px;background:#2a7a74;"></div>
<div class="r" style="left:1996.00px;top:656.00px;width:2.00px;height:6.00px;background:#8a7634;"></div>
<div class="r" style="left:1976.00px;top:672.00px;width:6.00px;height:6.00px;background:#3e4a42;"></div>
<div class="r" style="left:1978.00px;top:680.00px;width:2.00px;height:6.00px;background:#3e4a42;"></div>
<div class="r" style="left:1982.00px;top:680.00px;width:14.00px;height:6.00px;background:#3e4a42;"></div>
<div class="r" style="left:1998.00px;top:680.00px;width:2.00px;height:6.00px;background:#3e4a42;"></div>
<div class="r" style="left:1978.00px;top:688.00px;width:2.00px;height:6.00px;background:#3e4a42;"></div>
<div class="r" style="left:1982.00px;top:688.00px;width:4.00px;height:6.00px;background:#3e4a42;"></div>
<div class="r" style="left:1988.00px;top:688.00px;width:8.00px;height:6.00px;background:#3e4a42;"></div>
<div class="r" style="left:1998.00px;top:688.00px;width:2.00px;height:6.00px;background:#3e4a42;"></div>
<div class="r" style="left:1978.00px;top:696.00px;width:2.00px;height:6.00px;background:#3e4a42;"></div>
<div class="r" style="left:1982.00px;top:696.00px;width:6.00px;height:6.00px;background:#3e4a42;"></div>
<div class="r" style="left:1990.00px;top:696.00px;width:10.00px;height:6.00px;background:#3e4a42;"></div>
<div class="r" style="left:1978.00px;top:704.00px;width:2.00px;height:6.00px;background:#3e4a42;"></div>
<div class="r" style="left:1982.00px;top:704.00px;width:16.00px;height:6.00px;background:#3e4a42;"></div>
<div class="r" style="left:1978.00px;top:712.00px;width:2.00px;height:6.00px;background:#3e4a42;"></div>
<div class="r" style="left:1978.00px;top:720.00px;width:2.00px;height:6.00px;background:#3e4a42;"></div>
<div class="r" style="left:1982.00px;top:720.00px;width:12.00px;height:6.00px;background:#3e4a42;"></div>
<div class="r" style="left:1996.00px;top:720.00px;width:4.00px;height:6.00px;background:#3e4a42;"></div>
<div class="r" style="left:1978.00px;top:728.00px;width:2.00px;height:6.00px;background:#3e4a42;"></div>
<div class="r" style="left:1982.00px;top:728.00px;width:6.00px;height:6.00px;background:#3e4a42;"></div>
<div class="r" style="left:1990.00px;top:728.00px;width:10.00px;height:6.00px;background:#3e4a42;"></div>
<div class="r" style="left:1978.00px;top:736.00px;width:2.00px;height:6.00px;background:#3e4a42;"></div>
<div class="r" style="left:1982.00px;top:736.00px;width:16.00px;height:6.00px;background:#3e4a42;"></div>
<div class="r" style="left:1976.00px;top:756.00px;width:12.00px;height:6.00px;background:#626368;"></div>
<div class="r" style="left:1988.00px;top:756.00px;width:4.00px;height:6.00px;background:#8a7634;"></div>
<div class="r" style="left:1994.00px;top:756.00px;width:6.00px;height:6.00px;background:#3e5a8a;"></div>
<div class="r" style="left:1976.00px;top:772.00px;width:6.00px;height:6.00px;background:#3e4a42;"></div>
<div class="r" style="left:1978.00px;top:780.00px;width:2.00px;height:6.00px;background:#3e4a42;"></div>
<div class="r" style="left:1982.00px;top:780.00px;width:14.00px;height:6.00px;background:#3e4a42;"></div>
<div class="r" style="left:1998.00px;top:780.00px;width:2.00px;height:6.00px;background:#3e4a42;"></div>
<div class="r" style="left:1978.00px;top:788.00px;width:2.00px;height:6.00px;background:#3e4a42;"></div>
<div class="r" style="left:1982.00px;top:788.00px;width:14.00px;height:6.00px;background:#3e4a42;"></div>
<div class="r" style="left:1998.00px;top:788.00px;width:2.00px;height:6.00px;background:#3e4a42;"></div>
<div class="r" style="left:1978.00px;top:796.00px;width:2.00px;height:6.00px;background:#3e4a42;"></div>
<div class="r" style="left:1982.00px;top:796.00px;width:4.00px;height:6.00px;background:#3e4a42;"></div>
<div class="r" style="left:1988.00px;top:796.00px;width:6.00px;height:6.00px;background:#3e4a42;"></div>
<div class="r" style="left:1996.00px;top:796.00px;width:4.00px;height:6.00px;background:#3e4a42;"></div>
<div class="r" style="left:1978.00px;top:804.00px;width:2.00px;height:6.00px;background:#3e4a42;"></div>
<div class="r" style="left:1982.00px;top:804.00px;width:18.00px;height:6.00px;background:#3e4a42;"></div>
<div class="r" style="left:1978.00px;top:812.00px;width:2.00px;height:6.00px;background:#3e4a42;"></div>
<div class="r" style="left:1982.00px;top:812.00px;width:18.00px;height:6.00px;background:#3e4a42;"></div>
<div class="r" style="left:1978.00px;top:820.00px;width:2.00px;height:6.00px;background:#3e4a42;"></div>
<div class="r" style="left:1978.00px;top:828.00px;width:2.00px;height:6.00px;background:#3e4a42;"></div>
<div class="r" style="left:1982.00px;top:828.00px;width:10.00px;height:6.00px;background:#3e4a42;"></div>
<div class="r" style="left:1994.00px;top:828.00px;width:6.00px;height:6.00px;background:#3e4a42;"></div>
<div class="r" style="left:1978.00px;top:836.00px;width:2.00px;height:6.00px;background:#3e4a42;"></div>
<div class="r" style="left:1982.00px;top:836.00px;width:12.00px;height:6.00px;background:#3e4a42;"></div>
<div class="r" style="left:1996.00px;top:836.00px;width:4.00px;height:6.00px;background:#3e4a42;"></div>
<div class="r" style="left:1978.00px;top:844.00px;width:2.00px;height:6.00px;background:#3e4a42;"></div>
<div class="r" style="left:1982.00px;top:844.00px;width:6.00px;height:6.00px;background:#3e4a42;"></div>
<div class="r" style="left:1990.00px;top:844.00px;width:10.00px;height:6.00px;background:#3e4a42;"></div>
<div class="r" style="left:1978.00px;top:852.00px;width:2.00px;height:6.00px;background:#3e4a42;"></div>
<div class="r" style="left:1982.00px;top:852.00px;width:12.00px;height:6.00px;background:#3e4a42;"></div>
<div class="r" style="left:1996.00px;top:852.00px;width:4.00px;height:6.00px;background:#3e4a42;"></div>
<div class="r" style="left:1978.00px;top:860.00px;width:2.00px;height:6.00px;background:#3e4a42;"></div>
<div class="r" style="left:1982.00px;top:860.00px;width:6.00px;height:6.00px;background:#3e4a42;"></div>
<div class="r" style="left:1990.00px;top:860.00px;width:10.00px;height:6.00px;background:#3e4a42;"></div>
<div class="r" style="left:1978.00px;top:868.00px;width:2.00px;height:6.00px;background:#3e4a42;"></div>
<div class="r" style="left:1982.00px;top:868.00px;width:6.00px;height:6.00px;background:#3e4a42;"></div>
<div class="r" style="left:1990.00px;top:868.00px;width:8.00px;height:6.00px;background:#3e4a42;"></div>
<div class="r" style="left:1978.00px;top:876.00px;width:2.00px;height:6.00px;background:#3e4a42;"></div>
<div class="r" style="left:1978.00px;top:884.00px;width:2.00px;height:6.00px;background:#3e4a42;"></div>
<div class="r" style="left:1982.00px;top:884.00px;width:10.00px;height:6.00px;background:#3e4a42;"></div>
<div class="r" style="left:1994.00px;top:884.00px;width:6.00px;height:6.00px;background:#3e4a42;"></div>
<div class="r" style="left:1978.00px;top:892.00px;width:2.00px;height:6.00px;background:#3e4a42;"></div>
<div class="r" style="left:1982.00px;top:892.00px;width:6.00px;height:6.00px;background:#3e4a42;"></div>
<div class="r" style="left:1990.00px;top:892.00px;width:10.00px;height:6.00px;background:#3e4a42;"></div>
<div class="r" style="left:1978.00px;top:900.00px;width:2.00px;height:6.00px;background:#3e4a42;"></div>
<div class="r" style="left:1982.00px;top:900.00px;width:4.00px;height:6.00px;background:#3e4a42;"></div>
<div class="r" style="left:1988.00px;top:900.00px;width:6.00px;height:6.00px;background:#3e4a42;"></div>
<div class="r" style="left:1996.00px;top:900.00px;width:4.00px;height:6.00px;background:#3e4a42;"></div>
<div class="r" style="left:1978.00px;top:908.00px;width:2.00px;height:6.00px;background:#3e4a42;"></div>
<div class="r" style="left:1978.00px;top:916.00px;width:2.00px;height:6.00px;background:#3e4a42;"></div>
<div class="r" style="left:1982.00px;top:916.00px;width:14.00px;height:6.00px;background:#3e4a42;"></div>
<div class="r" style="left:1998.00px;top:916.00px;width:2.00px;height:6.00px;background:#3e4a42;"></div>
<div class="r" style="left:1978.00px;top:924.00px;width:2.00px;height:6.00px;background:#3e4a42;"></div>
<div class="r" style="left:1982.00px;top:924.00px;width:18.00px;height:6.00px;background:#3e4a42;"></div>
<div class="r" style="left:1978.00px;top:932.00px;width:2.00px;height:6.00px;background:#3e4a42;"></div>
<div class="r" style="left:1982.00px;top:932.00px;width:14.00px;height:6.00px;background:#3e4a42;"></div>
<div class="r" style="left:1998.00px;top:932.00px;width:2.00px;height:6.00px;background:#3e4a42;"></div>
<div class="r" style="left:1978.00px;top:940.00px;width:2.00px;height:6.00px;background:#3e4a42;"></div>
<div class="r" style="left:1982.00px;top:940.00px;width:10.00px;height:6.00px;background:#3e4a42;"></div>
<div class="r" style="left:1994.00px;top:940.00px;width:6.00px;height:6.00px;background:#3e4a42;"></div>
<div class="r" style="left:1978.00px;top:948.00px;width:2.00px;height:6.00px;background:#3e4a42;"></div>
<div class="r" style="left:1978.00px;top:956.00px;width:2.00px;height:6.00px;background:#3e4a42;"></div>
<div class="r" style="left:1982.00px;top:956.00px;width:18.00px;height:6.00px;background:#3e4a42;"></div>
<div class="r" style="left:1978.00px;top:964.00px;width:2.00px;height:6.00px;background:#3e4a42;"></div>
<div class="r" style="left:1982.00px;top:964.00px;width:6.00px;height:6.00px;background:#3e4a42;"></div>
<div class="r" style="left:1990.00px;top:964.00px;width:10.00px;height:6.00px;background:#3e4a42;"></div>
<div class="r" style="left:1978.00px;top:972.00px;width:2.00px;height:6.00px;background:#3e4a42;"></div>
<div class="r" style="left:1982.00px;top:972.00px;width:10.00px;height:6.00px;background:#3e4a42;"></div>
<div class="r" style="left:1994.00px;top:972.00px;width:4.00px;height:6.00px;background:#3e4a42;"></div>
<div class="r" style="left:1978.00px;top:980.00px;width:2.00px;height:6.00px;background:#3e4a42;"></div>
<div class="r" style="left:1978.00px;top:988.00px;width:2.00px;height:6.00px;background:#3e4a42;"></div>
<div class="r" style="left:1982.00px;top:988.00px;width:10.00px;height:6.00px;background:#3e4a42;"></div>
<div class="r" style="left:1978.00px;top:996.00px;width:2.00px;height:6.00px;background:#3e4a42;"></div>
<div class="r" style="left:1990.00px;top:996.00px;width:10.00px;height:6.00px;background:#3e4a42;"></div>
<div class="r" style="left:1976.00px;top:1012.00px;width:2.00px;height:6.00px;background:#8a7634;"></div>
<div class="r" style="left:1978.00px;top:1012.00px;width:2.00px;height:6.00px;background:#2a7a74;"></div>
<div class="r" style="left:1980.00px;top:1012.00px;width:2.00px;height:6.00px;background:#8a7634;"></div>
<div class="r" style="left:1984.00px;top:1012.00px;width:2.00px;height:6.00px;background:#2a7a74;"></div>
<div class="r" style="left:1986.00px;top:1012.00px;width:4.00px;height:6.00px;background:#8a7634;"></div>
<div class="r" style="left:1992.00px;top:1012.00px;width:8.00px;height:6.00px;background:#3e5a8a;"></div>
<div class="r" style="left:1976.00px;top:1036.00px;width:4.00px;height:6.00px;background:#4a4b52;"></div>
<div class="r" style="left:1982.00px;top:1036.00px;width:18.00px;height:6.00px;background:#4a4b52;"></div>
<div class="r" style="left:1976.00px;top:1052.00px;width:6.00px;height:6.00px;background:#3e4a42;"></div>
<div class="r" style="left:1978.00px;top:1060.00px;width:2.00px;height:6.00px;background:#3e4a42;"></div>
<div class="r" style="left:1982.00px;top:1060.00px;width:8.00px;height:6.00px;background:#3e4a42;"></div>
<div class="r" style="left:1992.00px;top:1060.00px;width:6.00px;height:6.00px;background:#3e4a42;"></div>
<div class="r" style="left:1978.00px;top:1068.00px;width:2.00px;height:6.00px;background:#3e4a42;"></div>
<div class="r" style="left:1982.00px;top:1068.00px;width:18.00px;height:6.00px;background:#3e4a42;"></div>
<div class="r" style="left:1978.00px;top:1076.00px;width:2.00px;height:6.00px;background:#3e4a42;"></div>
<div class="r" style="left:1982.00px;top:1076.00px;width:12.00px;height:6.00px;background:#3e4a42;"></div>
<div class="r" style="left:1996.00px;top:1076.00px;width:4.00px;height:6.00px;background:#3e4a42;"></div>
<div class="r" style="left:1978.00px;top:1084.00px;width:2.00px;height:6.00px;background:#3e4a42;"></div>
<div class="r" style="left:1982.00px;top:1084.00px;width:8.00px;height:6.00px;background:#3e4a42;"></div>
<div class="r" style="left:1992.00px;top:1084.00px;width:8.00px;height:6.00px;background:#3e4a42;"></div>
<div class="r" style="left:1978.00px;top:1092.00px;width:2.00px;height:6.00px;background:#3e4a42;"></div>
<div class="r" style="left:1982.00px;top:1092.00px;width:12.00px;height:6.00px;background:#3e4a42;"></div>
<div class="r" style="left:1996.00px;top:1092.00px;width:4.00px;height:6.00px;background:#3e4a42;"></div>
<div class="r" style="left:1978.00px;top:1100.00px;width:2.00px;height:6.00px;background:#3e4a42;"></div>
<div class="r" style="left:1982.00px;top:1100.00px;width:4.00px;height:6.00px;background:#3e4a42;"></div>
<div class="r" style="left:1988.00px;top:1100.00px;width:8.00px;height:6.00px;background:#3e4a42;"></div>
<div class="r" style="left:1998.00px;top:1100.00px;width:2.00px;height:6.00px;background:#3e4a42;"></div>
<div class="r" style="left:1978.00px;top:1108.00px;width:2.00px;height:6.00px;background:#3e4a42;"></div>
<div class="r" style="left:1982.00px;top:1108.00px;width:18.00px;height:6.00px;background:#3e4a42;"></div>
<div class="r" style="left:1978.00px;top:1116.00px;width:2.00px;height:6.00px;background:#3e4a42;"></div>
<div class="r" style="left:1982.00px;top:1116.00px;width:18.00px;height:6.00px;background:#3e4a42;"></div>
<div class="r" style="left:1978.00px;top:1124.00px;width:2.00px;height:6.00px;background:#3e4a42;"></div>
<div class="r" style="left:1982.00px;top:1124.00px;width:18.00px;height:6.00px;background:#3e4a42;"></div>
<div class="r" style="left:1978.00px;top:1132.00px;width:2.00px;height:6.00px;background:#3e4a42;"></div>
<div class="r" style="left:1978.00px;top:1140.00px;width:2.00px;height:6.00px;background:#3e4a42;"></div>
<div class="r" style="left:1982.00px;top:1140.00px;width:12.00px;height:6.00px;background:#3e4a42;"></div>
<div class="r" style="left:1996.00px;top:1140.00px;width:4.00px;height:6.00px;background:#3e4a42;"></div>
<div class="r" style="left:1978.00px;top:1148.00px;width:2.00px;height:6.00px;background:#3e4a42;"></div>
<div class="r" style="left:1982.00px;top:1148.00px;width:18.00px;height:6.00px;background:#3e4a42;"></div>
<div class="r" style="left:1978.00px;top:1156.00px;width:2.00px;height:6.00px;background:#3e4a42;"></div>
<div class="r" style="left:1982.00px;top:1156.00px;width:12.00px;height:6.00px;background:#3e4a42;"></div>
<div class="r" style="left:1996.00px;top:1156.00px;width:4.00px;height:6.00px;background:#3e4a42;"></div>
<div class="r" style="left:1978.00px;top:1164.00px;width:2.00px;height:6.00px;background:#3e4a42;"></div>
<div class="r" style="left:1982.00px;top:1164.00px;width:18.00px;height:6.00px;background:#3e4a42;"></div>
<div class="r" style="left:1978.00px;top:1172.00px;width:2.00px;height:6.00px;background:#3e4a42;"></div>
<div class="r" style="left:1982.00px;top:1172.00px;width:18.00px;height:6.00px;background:#3e4a42;"></div>
<div class="r" style="left:1978.00px;top:1180.00px;width:2.00px;height:6.00px;background:#3e4a42;"></div>
<div class="r" style="left:1982.00px;top:1180.00px;width:18.00px;height:6.00px;background:#3e4a42;"></div>
<div class="r" style="left:1978.00px;top:1188.00px;width:2.00px;height:6.00px;background:#3e4a42;"></div>
<div class="r" style="left:1978.00px;top:1196.00px;width:2.00px;height:6.00px;background:#3e4a42;"></div>
<div class="r" style="left:1982.00px;top:1196.00px;width:12.00px;height:6.00px;background:#3e4a42;"></div>
<div class="r" style="left:1996.00px;top:1196.00px;width:2.00px;height:6.00px;background:#3e4a42;"></div>
<div class="r" style="left:1978.00px;top:1204.00px;width:2.00px;height:6.00px;background:#3e4a42;"></div>
<div class="r" style="left:1982.00px;top:1204.00px;width:14.00px;height:6.00px;background:#3e4a42;"></div>
<div class="r" style="left:1998.00px;top:1204.00px;width:2.00px;height:6.00px;background:#3e4a42;"></div>
<div class="r" style="left:1978.00px;top:1212.00px;width:2.00px;height:6.00px;background:#3e4a42;"></div>
<div class="r" style="left:1998.00px;top:1212.00px;width:2.00px;height:6.00px;background:#3e4a42;"></div>
<div class="r" style="left:1976.00px;top:1228.00px;width:14.00px;height:6.00px;background:#6e584c;"></div>
<div class="r" style="left:1992.00px;top:1228.00px;width:6.00px;height:6.00px;background:#3e5a8a;"></div>
<div class="r" style="left:1998.00px;top:1228.00px;width:2.00px;height:6.00px;background:#8a7634;"></div>
<div class="r" style="left:1976.00px;top:1252.00px;width:6.00px;height:6.00px;background:#3e4a42;"></div>
<div class="r" style="left:1978.00px;top:1260.00px;width:2.00px;height:6.00px;background:#3e4a42;"></div>
<div class="r" style="left:1982.00px;top:1260.00px;width:14.00px;height:6.00px;background:#3e4a42;"></div>
<div class="r" style="left:1998.00px;top:1260.00px;width:2.00px;height:6.00px;background:#3e4a42;"></div>
<div class="r" style="left:1978.00px;top:1268.00px;width:2.00px;height:6.00px;background:#3e4a42;"></div>
<div class="r" style="left:1982.00px;top:1268.00px;width:18.00px;height:6.00px;background:#3e4a42;"></div>
<div class="r" style="left:1978.00px;top:1276.00px;width:2.00px;height:6.00px;background:#3e4a42;"></div>
<div class="r" style="left:1982.00px;top:1276.00px;width:8.00px;height:6.00px;background:#3e4a42;"></div>
<div class="r" style="left:1992.00px;top:1276.00px;width:8.00px;height:6.00px;background:#3e4a42;"></div>
<div class="r" style="left:1978.00px;top:1284.00px;width:2.00px;height:6.00px;background:#3e4a42;"></div>
<div class="r" style="left:1982.00px;top:1284.00px;width:12.00px;height:6.00px;background:#3e4a42;"></div>
<div class="r" style="left:1996.00px;top:1284.00px;width:4.00px;height:6.00px;background:#3e4a42;"></div>
<div class="r" style="left:1978.00px;top:1292.00px;width:2.00px;height:6.00px;background:#3e4a42;"></div>
<div class="r" style="left:1982.00px;top:1292.00px;width:8.00px;height:6.00px;background:#3e4a42;"></div>
<div class="r" style="left:1992.00px;top:1292.00px;width:6.00px;height:6.00px;background:#3e4a42;"></div>
<div class="r" style="left:1978.00px;top:1300.00px;width:2.00px;height:6.00px;background:#3e4a42;"></div>
<div class="r" style="left:1982.00px;top:1300.00px;width:18.00px;height:6.00px;background:#3e4a42;"></div>
<div class="r" style="left:1978.00px;top:1308.00px;width:2.00px;height:6.00px;background:#3e4a42;"></div>
<div class="r" style="left:1982.00px;top:1308.00px;width:12.00px;height:6.00px;background:#3e4a42;"></div>
<div class="r" style="left:1996.00px;top:1308.00px;width:4.00px;height:6.00px;background:#3e4a42;"></div>
<div class="r" style="left:1978.00px;top:1316.00px;width:2.00px;height:6.00px;background:#3e4a42;"></div>
<div class="r" style="left:1982.00px;top:1316.00px;width:8.00px;height:6.00px;background:#3e4a42;"></div>
<div class="r" style="left:1992.00px;top:1316.00px;width:8.00px;height:6.00px;background:#3e4a42;"></div>
<div class="r" style="left:1978.00px;top:1324.00px;width:2.00px;height:6.00px;background:#3e4a42;"></div>
<div class="r" style="left:1978.00px;top:1332.00px;width:2.00px;height:6.00px;background:#3e4a42;"></div>
<div class="r" style="left:1982.00px;top:1332.00px;width:12.00px;height:6.00px;background:#3e4a42;"></div>
<div class="r" style="left:1996.00px;top:1332.00px;width:2.00px;height:6.00px;background:#3e4a42;"></div>
<div class="r" style="left:1978.00px;top:1340.00px;width:2.00px;height:6.00px;background:#3e4a42;"></div>
<div class="r" style="left:1982.00px;top:1340.00px;width:14.00px;height:6.00px;background:#3e4a42;"></div>
<div class="r" style="left:1998.00px;top:1340.00px;width:2.00px;height:6.00px;background:#3e4a42;"></div>
<div class="r" style="left:1978.00px;top:1348.00px;width:2.00px;height:6.00px;background:#3e4a42;"></div>
<div class="r" style="left:1982.00px;top:1348.00px;width:14.00px;height:6.00px;background:#3e4a42;"></div>
<div class="r" style="left:1998.00px;top:1348.00px;width:2.00px;height:6.00px;background:#3e4a42;"></div>
<div class="r" style="left:1978.00px;top:1356.00px;width:2.00px;height:6.00px;background:#3e4a42;"></div>
<div class="r" style="left:1998.00px;top:1356.00px;width:2.00px;height:6.00px;background:#3e4a42;"></div>
<div class="r" style="left:1976.00px;top:1366.00px;width:14.00px;height:6.00px;background:#6e584c;"></div>
<div class="r" style="left:1992.00px;top:1366.00px;width:8.00px;height:6.00px;background:#3e5a8a;"></div>
<div class="r" style="left:1976.00px;top:1390.00px;width:4.00px;height:6.00px;background:#4a4b52;"></div>
<div class="r" style="left:1982.00px;top:1390.00px;width:8.00px;height:6.00px;background:#4a4b52;"></div>
<div class="r" style="left:1992.00px;top:1390.00px;width:8.00px;height:6.00px;background:#4a4b52;"></div>
<div class="r" style="left:1976.00px;top:1406.00px;width:6.00px;height:6.00px;background:#3e4a42;"></div>
<div class="r" style="left:1978.00px;top:1414.00px;width:2.00px;height:6.00px;background:#3e4a42;"></div>
<div class="r" style="left:1982.00px;top:1414.00px;width:14.00px;height:6.00px;background:#3e4a42;"></div>
<div class="r" style="left:1998.00px;top:1414.00px;width:2.00px;height:6.00px;background:#3e4a42;"></div>
<div class="r" style="left:1978.00px;top:1422.00px;width:2.00px;height:6.00px;background:#3e4a42;"></div>
<div class="r" style="left:1982.00px;top:1422.00px;width:18.00px;height:6.00px;background:#3e4a42;"></div>
<div class="r" style="left:1978.00px;top:1430.00px;width:2.00px;height:6.00px;background:#3e4a42;"></div>
<div class="r" style="left:1982.00px;top:1430.00px;width:12.00px;height:6.00px;background:#3e4a42;"></div>
<div class="r" style="left:1996.00px;top:1430.00px;width:4.00px;height:6.00px;background:#3e4a42;"></div>
<div class="r" style="left:1978.00px;top:1438.00px;width:2.00px;height:6.00px;background:#3e4a42;"></div>
<div class="r" style="left:1978.00px;top:1446.00px;width:2.00px;height:6.00px;background:#3e4a42;"></div>
<div class="r" style="left:1982.00px;top:1446.00px;width:12.00px;height:6.00px;background:#3e4a42;"></div>
<div class="r" style="left:1998.00px;top:1446.00px;width:2.00px;height:6.00px;background:#3e4a42;"></div>
<div class="r" style="left:1978.00px;top:1454.00px;width:2.00px;height:6.00px;background:#3e4a42;"></div>
<div class="r" style="left:1982.00px;top:1454.00px;width:14.00px;height:6.00px;background:#3e4a42;"></div>
<div class="r" style="left:1998.00px;top:1454.00px;width:2.00px;height:6.00px;background:#3e4a42;"></div>
<div class="r" style="left:1978.00px;top:1462.00px;width:2.00px;height:6.00px;background:#3e4a42;"></div>
<div class="r" style="left:1998.00px;top:1462.00px;width:2.00px;height:6.00px;background:#3e4a42;"></div>
<div class="r" style="left:1978.00px;top:1470.00px;width:2.00px;height:6.00px;background:#3e4a42;"></div>
<div class="r" style="left:1982.00px;top:1470.00px;width:14.00px;height:6.00px;background:#3e4a42;"></div>
<div class="r" style="left:1998.00px;top:1470.00px;width:2.00px;height:6.00px;background:#3e4a42;"></div>
<div class="r" style="left:1978.00px;top:1478.00px;width:2.00px;height:6.00px;background:#3e4a42;"></div>
<div class="r" style="left:1998.00px;top:1478.00px;width:2.00px;height:6.00px;background:#3e4a42;"></div>
<div class="r" style="left:1978.00px;top:1486.00px;width:2.00px;height:6.00px;background:#3e4a42;"></div>
<div class="r" style="left:1998.00px;top:1486.00px;width:2.00px;height:6.00px;background:#3e4a42;"></div>
<div class="r" style="left:1978.00px;top:1494.00px;width:2.00px;height:6.00px;background:#3e4a42;"></div>
<div class="r" style="left:1982.00px;top:1494.00px;width:6.00px;height:6.00px;background:#3e4a42;"></div>
<div class="r" style="left:1990.00px;top:1494.00px;width:10.00px;height:6.00px;background:#3e4a42;"></div>
<div class="r" style="left:1978.00px;top:1502.00px;width:2.00px;height:6.00px;background:#3e4a42;"></div>
<div class="r" style="left:1982.00px;top:1502.00px;width:14.00px;height:6.00px;background:#3e4a42;"></div>
<div class="r" style="left:1998.00px;top:1502.00px;width:2.00px;height:6.00px;background:#3e4a42;"></div>
<div class="r" style="left:1978.00px;top:1510.00px;width:2.00px;height:6.00px;background:#3e4a42;"></div>
<div class="r" style="left:1998.00px;top:1510.00px;width:2.00px;height:6.00px;background:#3e4a42;"></div>
<div class="r" style="left:1976.00px;top:1528.00px;width:14.00px;height:6.00px;background:#6e584c;"></div>
<div class="r" style="left:1992.00px;top:1528.00px;width:8.00px;height:6.00px;background:#3e5a8a;"></div>
<div class="r" style="left:1976.00px;top:1544.00px;width:6.00px;height:6.00px;background:#3e4a42;"></div>
<div class="r" style="left:1978.00px;top:1552.00px;width:2.00px;height:6.00px;background:#3e4a42;"></div>
<div class="r" style="left:1982.00px;top:1552.00px;width:8.00px;height:6.00px;background:#3e4a42;"></div>
<div class="r" style="left:1992.00px;top:1552.00px;width:6.00px;height:6.00px;background:#3e4a42;"></div>
<div class="r" style="left:1978.00px;top:1560.00px;width:2.00px;height:6.00px;background:#3e4a42;"></div>
<div class="r" style="left:1982.00px;top:1560.00px;width:14.00px;height:6.00px;background:#3e4a42;"></div>
<div class="r" style="left:1998.00px;top:1560.00px;width:2.00px;height:6.00px;background:#3e4a42;"></div>
<div class="r" style="left:1978.00px;top:1568.00px;width:2.00px;height:6.00px;background:#3e4a42;"></div>
<div class="r" style="left:1982.00px;top:1568.00px;width:18.00px;height:6.00px;background:#3e4a42;"></div>
<div class="r" style="left:1978.00px;top:1576.00px;width:2.00px;height:6.00px;background:#3e4a42;"></div>
<div class="r" style="left:1982.00px;top:1576.00px;width:16.00px;height:6.00px;background:#3e4a42;"></div>
<div class="r" style="left:1978.00px;top:1584.00px;width:2.00px;height:6.00px;background:#3e4a42;"></div>
<div class="r" style="left:1982.00px;top:1584.00px;width:10.00px;height:6.00px;background:#3e4a42;"></div>
<div class="r" style="left:1996.00px;top:1584.00px;width:4.00px;height:6.00px;background:#3e4a42;"></div>
<div class="r" style="left:1978.00px;top:1592.00px;width:2.00px;height:6.00px;background:#3e4a42;"></div>
<div class="r" style="left:1982.00px;top:1592.00px;width:18.00px;height:6.00px;background:#3e4a42;"></div>
<div class="r" style="left:1978.00px;top:1600.00px;width:2.00px;height:6.00px;background:#3e4a42;"></div>
<div class="r" style="left:1978.00px;top:1608.00px;width:2.00px;height:6.00px;background:#3e4a42;"></div>
<div class="r" style="left:1982.00px;top:1608.00px;width:12.00px;height:6.00px;background:#3e4a42;"></div>
<div class="r" style="left:1998.00px;top:1608.00px;width:2.00px;height:6.00px;background:#3e4a42;"></div>
<div class="r" style="left:1978.00px;top:1616.00px;width:2.00px;height:6.00px;background:#3e4a42;"></div>
<div class="r" style="left:1982.00px;top:1616.00px;width:14.00px;height:6.00px;background:#3e4a42;"></div>
<div class="r" style="left:1998.00px;top:1616.00px;width:2.00px;height:6.00px;background:#3e4a42;"></div>
<div class="r" style="left:1978.00px;top:1624.00px;width:2.00px;height:6.00px;background:#3e4a42;"></div>
<div class="r" style="left:1978.00px;top:1632.00px;width:2.00px;height:6.00px;background:#3e4a42;"></div>
<div class="r" style="left:1982.00px;top:1632.00px;width:14.00px;height:6.00px;background:#3e4a42;"></div>
<div class="r" style="left:1998.00px;top:1632.00px;width:2.00px;height:6.00px;background:#3e4a42;"></div>
<div class="r" style="left:1978.00px;top:1640.00px;width:2.00px;height:6.00px;background:#3e4a42;"></div>
<div class="r" style="left:1998.00px;top:1640.00px;width:2.00px;height:6.00px;background:#3e4a42;"></div>
<div class="r" style="left:1978.00px;top:1648.00px;width:2.00px;height:6.00px;background:#3e4a42;"></div>
<div class="r" style="left:1982.00px;top:1648.00px;width:14.00px;height:6.00px;background:#3e4a42;"></div>
<div class="r" style="left:1998.00px;top:1648.00px;width:2.00px;height:6.00px;background:#3e4a42;"></div>
<div class="r" style="left:1978.00px;top:1656.00px;width:2.00px;height:6.00px;background:#3e4a42;"></div>
<div class="r" style="left:1998.00px;top:1656.00px;width:2.00px;height:6.00px;background:#3e4a42;"></div>
<div class="r" style="left:1978.00px;top:1664.00px;width:2.00px;height:6.00px;background:#3e4a42;"></div>
<div class="r" style="left:1982.00px;top:1664.00px;width:14.00px;height:6.00px;background:#3e4a42;"></div>
<div class="r" style="left:1998.00px;top:1664.00px;width:2.00px;height:6.00px;background:#3e4a42;"></div>
<div class="r" style="left:1978.00px;top:1672.00px;width:2.00px;height:6.00px;background:#3e4a42;"></div>
<div class="r" style="left:1998.00px;top:1672.00px;width:2.00px;height:6.00px;background:#3e4a42;"></div>
<div class="r" style="left:1968.00px;top:300.00px;width:32.00px;height:250.00px;background:rgba(255,255,255,0.09);border-radius:6px 0 0 6px;"></div>
<div class="r" style="left:1968.00px;top:384.00px;width:32.00px;height:8.00px;background:#3c528a;"></div>
<span class="t" style="left:1972.6px;top:387.4px;font-size:19px;line-height:1;color:#5cb848;font-weight:bold;width:29px;overflow:hidden;transform:scaleX(1.05)">Set</span>
</div></body></html>
